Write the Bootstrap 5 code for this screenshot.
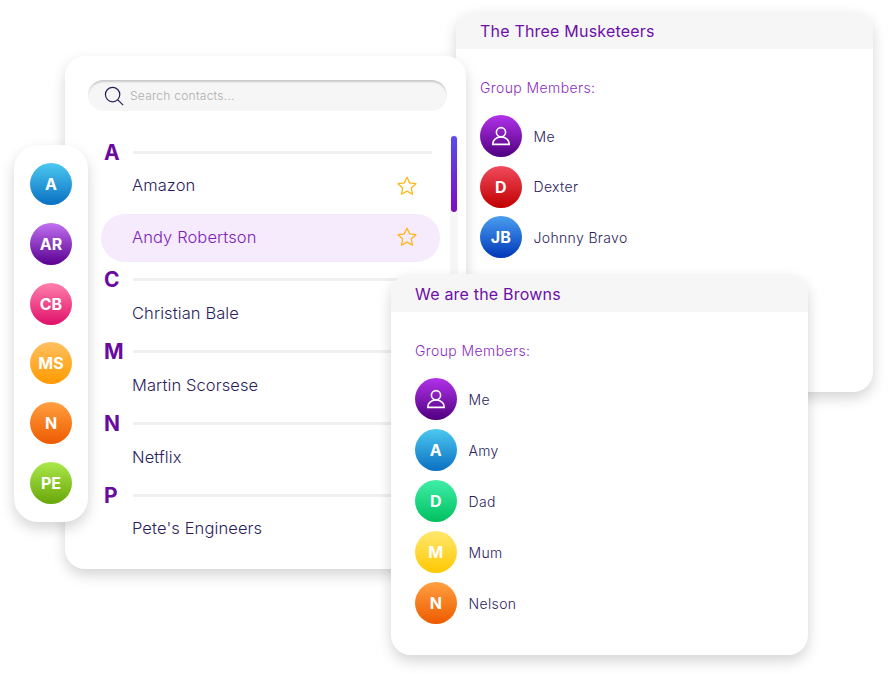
<!DOCTYPE html>
<html lang="en">
<head>
  <meta charset="UTF-8" />
  <meta name="viewport" content="width=device-width, initial-scale=1.0" />
  <title>Contacts and Groups</title>
  <link href="https://cdn.jsdelivr.net/npm/bootstrap@5.3.0/dist/css/bootstrap.min.css" rel="stylesheet" />
  <style>
    body {
      background: #fff;
      font-family: "Inter", "Liberation Sans", sans-serif;
      font-weight: 300;
      color: #2b1c5c;
    }

    .stage {
      position: relative;
      width: 891px;
      height: 674px;
      overflow: hidden;
    }

    .sheet {
      position: absolute;
      background: #fff;
      box-shadow: 0 6px 14px rgba(0, 0, 0, 0.17);
    }

    /* contacts window */
    .contacts-sheet {
      left: 65px;
      top: 56px;
      width: 401px;
      height: 513px;
      border-radius: 20px;
      padding: 24px 0 0 23px;
      z-index: 2;
    }

    .search-box {
      width: 359px;
      height: 31px;
      padding-left: 16px;
      gap: 6px;
      background: #f6f6f6;
      border-radius: 16px;
      box-shadow: inset 0 3px 2px -1px rgba(0, 0, 0, 0.18);
    }

    .search-box .form-control {
      padding: 0;
      border: 0;
      background: transparent;
      box-shadow: none;
      font-size: 12px;
      letter-spacing: 0.25px;
      font-weight: 300;
    }

    .search-box .form-control::placeholder {
      color: #adadad;
      opacity: 1;
    }

    .contact-list {
      width: 339px;
      margin: 29px 0 0 13px;
    }

    .letter-row {
      height: 25px;
      margin-top: 5px;
      padding-left: 3px;
      width: 331px;
    }

    .letter-row:first-child {
      margin-top: 0;
    }

    .letter-mark {
      width: 29px;
      font-size: 21px;
      font-weight: 700;
      line-height: 1;
      color: #6a0a9e;
    }

    .letter-line {
      flex: 1;
      height: 3px;
      background: #f0f0f0;
    }

    .contact-row {
      height: 42px;
      padding: 0 23px 0 31px;
      font-size: 16.5px;
      letter-spacing: 0.1px;
    }

    .letter-row:first-child + .contact-row {
      height: 41px;
    }

    .contact-row:last-child {
      height: 40px;
    }

    .contact-row.is-active {
      height: 48px;
      margin-top: 8px;
      padding-bottom: 2px;
      background: #f6eafd;
      border-radius: 24px;
      color: #7d22b8;
    }

    .scroll-track {
      position: absolute;
      left: 385px;
      top: 79px;
      width: 8px;
      height: 360px;
      background: #f6f6f6;
      border-radius: 4px;
    }

    .scroll-thumb {
      width: 6px;
      height: 76px;
      margin: 1px auto 0;
      border-radius: 3px;
      background: linear-gradient(#5a4ceb, #7a0fc0);
    }

    /* avatar rail */
    .rail-sheet {
      left: 14px;
      top: 145px;
      width: 74px;
      height: 377px;
      padding-top: 18px;
      border-radius: 24px;
      gap: 17.8px;
      z-index: 3;
    }

    .face {
      flex: none;
      width: 42px;
      height: 42px;
      color: #fff;
      font-size: 16px;
      font-weight: 700;
      line-height: 1;
    }

    .face-sky { background: linear-gradient(#4cc8f0, #0a70c2); }
    .face-violet { background: linear-gradient(#c070f0, #5a0090); }
    .face-me { background: linear-gradient(#b232ea, #4f0080); }
    .face-pink { background: linear-gradient(#ff80ac, #e0106a); }
    .face-amber { background: linear-gradient(#ffc060, #ff9a00); }
    .face-orange { background: linear-gradient(#ffa040, #ee5a00); }
    .face-lime { background: linear-gradient(#aae84c, #68a60a); }
    .face-red { background: linear-gradient(#f04a5c, #c00000); }
    .face-blue { background: linear-gradient(#4a9ef0, #0038b8); }
    .face-green { background: linear-gradient(#40eea8, #00c060); }
    .face-yellow { background: linear-gradient(#ffe870, #ffc800); }

    /* group windows */
    .group-sheet {
      width: 417px;
      height: 381px;
      border: 0;
      border-radius: 20px;
      overflow: hidden;
    }

    .group-one { left: 456px; top: 11px; z-index: 1; }
    .group-two { left: 391px; top: 274px; z-index: 4; }

    .group-title {
      height: 38px;
      padding: 1px 24px 0;
      background: #f6f6f6;
      border: 0;
      color: #6d0fa8;
      font-size: 16px;
      font-weight: 400;
      letter-spacing: 0.2px;
    }

    .group-body {
      padding: 29px 24px 0;
    }

    .group-label {
      height: 20px;
      margin-bottom: 17px;
      color: #8a2fc0;
      font-size: 14px;
      line-height: 20px;
      letter-spacing: 0.4px;
    }

    .member-list {
      gap: 9px;
    }

    .group-one .member-list {
      gap: 8.6px;
    }

    .member-row {
      gap: 11.5px;
      font-size: 14px;
      letter-spacing: 0.35px;
    }
  </style>
</head>
<body class="m-0">

  <div class="stage">

    <!-- group behind the contact list -->
    <div class="card sheet group-sheet group-one">
      <div class="card-header d-flex align-items-center group-title">The Three Musketeers</div>
      <div class="group-body">
        <div class="group-label">Group Members:</div>
        <ul class="list-unstyled d-flex flex-column m-0 member-list">
          <li class="d-flex align-items-center member-row">
            <span class="face face-me rounded-circle d-flex align-items-center justify-content-center">
              <svg width="20" height="20" viewBox="0 0 20 20" fill="none" stroke="#fff" stroke-width="1.6"><circle cx="10" cy="6.2" r="4.6"/><path d="M1.8 18.4h16.4c.3-4.4-3.4-7.4-8.2-7.4s-8.5 3-8.2 7.4z"/></svg>
            </span>
            Me
          </li>
          <li class="d-flex align-items-center member-row">
            <span class="face face-red rounded-circle d-flex align-items-center justify-content-center">D</span>
            Dexter
          </li>
          <li class="d-flex align-items-center member-row">
            <span class="face face-blue rounded-circle d-flex align-items-center justify-content-center">JB</span>
            Johnny Bravo
          </li>
        </ul>
      </div>
    </div>

    <!-- contact list -->
    <div class="sheet contacts-sheet">
      <div class="search-box d-flex align-items-center">
        <svg width="20" height="20" viewBox="0 0 20 20" fill="none" stroke="#2b1c5c" stroke-width="1.2" class="flex-shrink-0"><circle cx="8.6" cy="8.6" r="7.2"/><path d="M13.8 13.8l5.4 5.4"/></svg>
        <input type="text" class="form-control" placeholder="Search contacts..." />
      </div>

      <div class="contact-list">
        <div class="d-flex align-items-center letter-row"><span class="letter-mark">A</span><span class="letter-line"></span></div>
        <div class="d-flex align-items-center justify-content-between contact-row">
          Amazon
          <svg width="20" height="20" viewBox="0 0 20 20" fill="none" stroke="#fdb718" stroke-width="1.3" stroke-linejoin="round"><path d="M10 1.2l2.7 5.7 6.2.8-4.6 4.3 1.2 6.2-5.5-3.1-5.5 3.1 1.2-6.2L1.1 7.7l6.2-.8z"/></svg>
        </div>
        <div class="d-flex align-items-center justify-content-between contact-row is-active">
          Andy Robertson
          <svg width="20" height="20" viewBox="0 0 20 20" fill="none" stroke="#fdb718" stroke-width="1.3" stroke-linejoin="round"><path d="M10 1.2l2.7 5.7 6.2.8-4.6 4.3 1.2 6.2-5.5-3.1-5.5 3.1 1.2-6.2L1.1 7.7l6.2-.8z"/></svg>
        </div>
        <div class="d-flex align-items-center letter-row"><span class="letter-mark">C</span><span class="letter-line"></span></div>
        <div class="d-flex align-items-center contact-row">Christian Bale</div>
        <div class="d-flex align-items-center letter-row"><span class="letter-mark">M</span><span class="letter-line"></span></div>
        <div class="d-flex align-items-center contact-row">Martin Scorsese</div>
        <div class="d-flex align-items-center letter-row"><span class="letter-mark">N</span><span class="letter-line"></span></div>
        <div class="d-flex align-items-center contact-row">Netflix</div>
        <div class="d-flex align-items-center letter-row"><span class="letter-mark">P</span><span class="letter-line"></span></div>
        <div class="d-flex align-items-center contact-row">Pete's Engineers</div>
      </div>

      <div class="scroll-track"><div class="scroll-thumb"></div></div>
    </div>

    <!-- avatar rail -->
    <div class="sheet rail-sheet d-flex flex-column align-items-center">
      <span class="face face-sky rounded-circle d-flex align-items-center justify-content-center">A</span>
      <span class="face face-violet rounded-circle d-flex align-items-center justify-content-center">AR</span>
      <span class="face face-pink rounded-circle d-flex align-items-center justify-content-center">CB</span>
      <span class="face face-amber rounded-circle d-flex align-items-center justify-content-center">MS</span>
      <span class="face face-orange rounded-circle d-flex align-items-center justify-content-center">N</span>
      <span class="face face-lime rounded-circle d-flex align-items-center justify-content-center">PE</span>
    </div>

    <!-- group in front -->
    <div class="card sheet group-sheet group-two">
      <div class="card-header d-flex align-items-center group-title">We are the Browns</div>
      <div class="group-body">
        <div class="group-label">Group Members:</div>
        <ul class="list-unstyled d-flex flex-column m-0 member-list">
          <li class="d-flex align-items-center member-row">
            <span class="face face-me rounded-circle d-flex align-items-center justify-content-center">
              <svg width="20" height="20" viewBox="0 0 20 20" fill="none" stroke="#fff" stroke-width="1.6"><circle cx="10" cy="6.2" r="4.6"/><path d="M1.8 18.4h16.4c.3-4.4-3.4-7.4-8.2-7.4s-8.5 3-8.2 7.4z"/></svg>
            </span>
            Me
          </li>
          <li class="d-flex align-items-center member-row">
            <span class="face face-sky rounded-circle d-flex align-items-center justify-content-center">A</span>
            Amy
          </li>
          <li class="d-flex align-items-center member-row">
            <span class="face face-green rounded-circle d-flex align-items-center justify-content-center">D</span>
            Dad
          </li>
          <li class="d-flex align-items-center member-row">
            <span class="face face-yellow rounded-circle d-flex align-items-center justify-content-center">M</span>
            Mum
          </li>
          <li class="d-flex align-items-center member-row">
            <span class="face face-orange rounded-circle d-flex align-items-center justify-content-center">N</span>
            Nelson
          </li>
        </ul>
      </div>
    </div>

  </div>

  <script src="https://cdn.jsdelivr.net/npm/bootstrap@5.3.0/dist/js/bootstrap.bundle.min.js"></script>
</body>
</html>
